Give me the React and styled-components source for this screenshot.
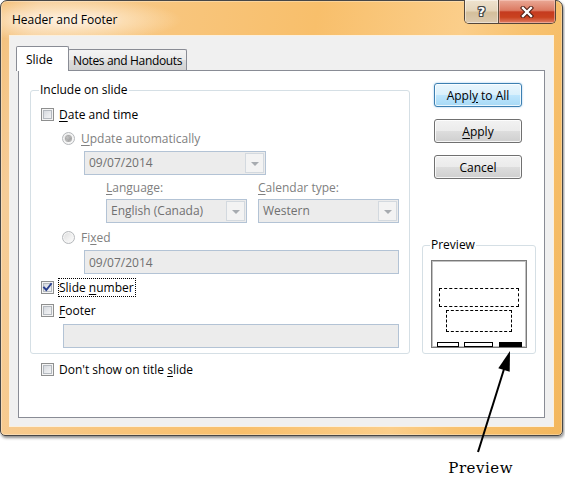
import React from 'react';
import styled, { createGlobalStyle } from 'styled-components';

const GlobalStyle = createGlobalStyle`
  html, body { margin: 0; padding: 0; background: #ffffff; }
  body { font-family: "Open Sans", "Noto Sans", sans-serif; font-size: 12px; color: #000; }
  * { box-sizing: border-box; }
`;

const Page = styled.div`
  position: relative;
  width: 565px;
  height: 502px;
  overflow: hidden;
  background: #fff;
`;

const Window = styled.div`
  width: 563px;
  height: 436px;
  border: 1px solid #474747;
  border-radius: 7px 7px 5px 5px;
  display: flex;
  flex-direction: column;
  background:
    radial-gradient(ellipse 115px 22px at 66px 19px, rgba(255, 246, 232, 0.9) 0%, rgba(255, 238, 212, 0.5) 55%, rgba(255, 232, 200, 0) 100%),
    linear-gradient(100deg, #f3bf78 0%, #f6cd98 6%, #f8c57c 28%, #f8bf6b 50%, #fbce8a 73%, #f8c270 83%, #f3b75d 100%);
  box-shadow: inset 0 0 0 1px rgba(255, 255, 255, 0.3), 1px 2px 3px rgba(0, 0, 0, 0.45);
`;

const TitleBar = styled.div`
  height: 34px;
  flex: none;
  display: flex;
  align-items: center;
  justify-content: space-between;
  padding: 2px 6px 0 11px;
`;

const Title = styled.span`
  font-size: 12px;
  color: #000;
  text-shadow: 0 0 8px rgba(255, 255, 255, 0.9), 0 0 14px rgba(255, 255, 255, 0.6);
`;

const CaptionButtons = styled.div`
  align-self: flex-start;
  margin-top: -3px;
  display: flex;
  height: 24px;
  border: 1px solid #54463a;
  border-top: none;
  border-radius: 0 0 5px 5px;
  overflow: hidden;
`;

const HelpButton = styled.div`
  width: 34px;
  display: flex;
  align-items: center;
  justify-content: center;
  border-right: 1px solid #5c4c3c;
  background: linear-gradient(#efe3cf 0%, #e5d6bc 45%, #d4bf9b 55%, #dccab0 100%);
  box-shadow: inset 0 0 0 1px rgba(255, 255, 255, 0.45);
`;

const HelpGlyph = styled.span`
  font-family: "DejaVu Sans", sans-serif;
  font-weight: bold;
  font-size: 13px;
  line-height: 13px;
  color: #fff;
  text-shadow: -1px 0 #444, 1px 0 #444, 0 -1px #444, 0 1px #444, 1px 1px #444, -1px -1px #444, 1px -1px #444, -1px 1px #444;
`;

const CloseButton = styled.div`
  width: 56px;
  display: flex;
  align-items: center;
  justify-content: center;
  background: linear-gradient(#eaa996 0%, #dc7a62 45%, #c53b1f 52%, #c9421f 75%, #e07e64 100%);
  box-shadow: inset 0 0 0 1px rgba(255, 220, 210, 0.45);
`;

const FrameBody = styled.div`
  flex: 1;
  display: flex;
  padding: 0 8px 8px;
`;

const Client = styled.div`
  flex: 1;
  display: flex;
  flex-direction: column;
  background: #f0f0f0;
  border: 1px solid #fbf0de;
  padding: 10px 8px 8px;
`;

const TabStrip = styled.div`
  display: flex;
  align-items: flex-end;
  height: 24px;
  flex: none;
`;

const Tab = styled.div`
  position: relative;
  z-index: ${p => (p.$active ? 1 : 0)};
  height: ${p => (p.$active ? 25 : 21)}px;
  width: ${p => p.$w}px;
  margin-left: ${p => p.$ml}px;
  margin-bottom: ${p => (p.$active ? -1 : 0)}px;
  padding-left: ${p => p.$pl}px;
  display: flex;
  align-items: center;
  border: 1px solid #898c95;
  border-bottom: none;
  border-radius: 2px 2px 0 0;
  background: ${p => (p.$active ? '#ffffff' : 'linear-gradient(#f3f3f3 0%, #ebebeb 50%, #dddddd 51%, #d2d2d2 100%)')};
  letter-spacing: ${p => p.$ls || 0}px;
  white-space: nowrap;
`;

const TabPanel = styled.div`
  flex: 1;
  background: #fff;
  border: 1px solid #898c95;
  display: grid;
  grid-template-columns: 380px 114px;
  grid-template-rows: auto auto;
  column-gap: 12px;
  align-content: start;
  padding: 11px 8px 0 11px;
`;

const GroupBox = styled.fieldset`
  margin: 0;
  min-width: 0;
  border: 1px solid #d5dfe5;
  border-radius: 3px;
  padding: 0 0 5px ${p => p.$pl}px;
  display: flex;
  flex-direction: column;
  align-items: flex-start;
`;

const Legend = styled.legend`
  padding: 0 1px;
  margin-left: ${p => p.$ml}px;
  line-height: 16px;
  font-size: 12px;
  color: #000;
`;

const Row = styled.div`
  display: flex;
  align-items: center;
  height: ${p => p.$h || 17}px;
  margin-top: ${p => p.$mt || 0}px;
  margin-left: ${p => p.$ml || 0}px;
  flex: none;
`;

const Label = styled.span`
  margin-left: ${p => p.$gap || 4}px;
  padding: 1px 1px 1px 0;
  line-height: 15px;
  border: 1px ${p => (p.$focus ? 'dotted #000' : 'solid transparent')};
  color: ${p => (p.$disabled ? '#808080' : '#000')};
  white-space: nowrap;
`;

const Key = styled.span`
  text-decoration: underline;
  text-underline-offset: 2px;
  text-decoration-thickness: 1px;
`;

const CheckBox = styled.span`
  width: 13px;
  height: 13px;
  flex: none;
  display: flex;
  align-items: center;
  justify-content: center;
  border: 1px solid #8e8f8f;
  background: linear-gradient(135deg, #cdd1d7 0%, #e8eaed 55%, #f8f8f8 100%);
  box-shadow: inset 0 0 0 1px #f4f4f4, inset 0 0 0 2px #b4b9bf;
`;

const Radio = styled.span`
  width: 13px;
  height: 13px;
  flex: none;
  border-radius: 50%;
  display: flex;
  align-items: center;
  justify-content: center;
  border: 1px solid #b5b8bb;
  background: linear-gradient(135deg, #dcdcdc 0%, #f2f2f2 60%, #fcfcfc 100%);
  box-shadow: inset 0 0 0 1px #f6f6f6;
`;

const RadioDot = styled.span`
  width: 5px;
  height: 5px;
  border-radius: 50%;
  background: radial-gradient(circle at 35% 35%, #c4c4c4 0%, #8f8f8f 100%);
  box-shadow: 0 0 0 1px #a9a9a9;
`;

const Combo = styled.div`
  width: ${p => p.$w}px;
  height: 24px;
  flex: none;
  display: flex;
  align-items: stretch;
  justify-content: space-between;
  border: 1px solid #b3c3d5;
  background: #ececec;
  padding: 1px 1px 1px 4px;
  color: #707070;
`;

const ComboText = styled.span`
  align-self: center;
  line-height: 16px;
  white-space: nowrap;
`;

const DropButton = styled.span`
  width: 19px;
  display: flex;
  align-items: center;
  justify-content: center;
  border: 1px solid #d3d9df;
  background: #f3f3f3;
`;

const DropArrow = styled.span`
  width: 0;
  height: 0;
  border-left: 4px solid transparent;
  border-right: 4px solid transparent;
  border-top: 4px solid #a7abb0;
  margin-top: 1px;
`;

const TextBox = styled.div`
  width: ${p => p.$w}px;
  height: 24px;
  flex: none;
  display: flex;
  align-items: center;
  border: 1px solid #b3c3d5;
  background: #ececec;
  padding-left: 4px;
  color: #707070;
  margin-top: ${p => p.$mt || 0}px;
  margin-left: ${p => p.$ml || 0}px;
`;

const PairGrid = styled.div`
  display: grid;
  grid-template-columns: 141px 141px;
  column-gap: 11px;
  margin-top: ${p => p.$mt || 0}px;
  margin-left: ${p => p.$ml || 0}px;
  flex: none;
`;

const SmallLabel = styled.span`
  line-height: 16px;
  color: #808080;
  white-space: nowrap;
`;

const SideColumn = styled.div`
  display: flex;
  flex-direction: column;
  justify-content: space-between;
`;

const ButtonStack = styled.div`
  display: flex;
  flex-direction: column;
  gap: 12px;
  padding: 1px 0 0 12px;
`;

const PushButton = styled.div`
  width: 88px;
  height: 24px;
  display: flex;
  align-items: center;
  justify-content: center;
  border-radius: 3px;
  border: 1px solid ${p => (p.$default ? '#3c7fb1' : '#707070')};
  background: ${p =>
    p.$default
      ? 'linear-gradient(#eaf6fd 0%, #d9f0fc 50%, #bee6fd 51%, #a7d9f5 100%)'
      : 'linear-gradient(#f2f2f2 0%, #ebebeb 50%, #dddddd 51%, #cfcfcf 100%)'};
  box-shadow: inset 0 0 0 1px ${p => (p.$default ? 'rgba(255,255,255,0.75)' : 'rgba(255,255,255,0.8)')}
    ${p => (p.$default ? ', 0 0 2px rgba(60, 150, 220, 0.6)' : '')};
  color: #000;
  white-space: nowrap;
`;

const PreviewBox = styled.div`
  width: 96px;
  height: 88px;
  margin-top: 7px;
  border: 1px solid #7a7a7a;
  box-shadow: inset 0 0 0 1px #c2c2c2;
  background: #fff;
  display: flex;
  flex-direction: column;
  padding-top: 27px;
`;

const Placeholder = styled.div`
  width: ${p => p.$w}px;
  height: ${p => p.$h}px;
  margin-left: ${p => p.$ml}px;
  margin-top: ${p => p.$mt || 0}px;
  border: 1px dashed #000;
`;

const FooterBars = styled.div`
  margin-top: auto;
  display: flex;
  align-items: flex-end;
  padding-left: 5px;
  height: 5px;
`;

const Bar = styled.div`
  width: ${p => p.$w}px;
  height: 5px;
  margin-left: ${p => p.$ml || 0}px;
  border: 1px solid #000;
  background: ${p => (p.$filled ? '#000' : '#fff')};
`;

const DontShowRow = styled(Row)`
  grid-column: 1;
`;

const Caption = styled.div`
  width: 563px;
  margin-top: 23px;
  display: flex;
  justify-content: flex-end;
  padding-right: 50px;
  font-family: "DejaVu Serif", "Liberation Serif", serif;
  font-size: 15px;
  line-height: 18px;
  letter-spacing: 0.5px;
  color: #000;
`;

const ArrowLayer = styled.svg`
  position: absolute;
  left: 0;
  top: 0;
  pointer-events: none;
`;

function Check({ checked }) {
  return (
    <CheckBox>
      {checked && (
        <svg width="11" height="11" viewBox="0 0 11 11">
          <path d="M2 5.5 L4.3 8 L9 2" fill="none" stroke="#2a3f8f" strokeWidth="1.9" strokeLinecap="square" />
        </svg>
      )}
    </CheckBox>
  );
}

function DropCombo({ w, text }) {
  return (
    <Combo $w={w}>
      <ComboText>{text}</ComboText>
      <DropButton>
        <DropArrow />
      </DropButton>
    </Combo>
  );
}

export default function App() {
  return (
    <Page>
      <GlobalStyle />
      <Window>
        <TitleBar>
          <Title>Header and Footer</Title>
          <CaptionButtons>
            <HelpButton>
              <HelpGlyph>?</HelpGlyph>
            </HelpButton>
            <CloseButton>
              <svg width="14" height="12" viewBox="0 0 14 12">
                <path d="M3 2 L11 10 M11 2 L3 10" stroke="#4a1c12" strokeWidth="4.4" strokeLinecap="square" fill="none" />
                <path d="M3 2 L11 10 M11 2 L3 10" stroke="#ffffff" strokeWidth="2.4" strokeLinecap="square" fill="none" />
              </svg>
            </CloseButton>
          </CaptionButtons>
        </TitleBar>
        <FrameBody>
          <Client>
            <TabStrip>
              <Tab $active $w={53} $ml={-2} $pl={9}>Slide</Tab>
              <Tab $w={119} $ml={-1} $pl={4} $ls={-0.35}>Notes and Handouts</Tab>
            </TabStrip>
            <TabPanel>
              <GroupBox $pl={10}>
                <Legend $ml={-2}>Include on slide</Legend>
                <Row $mt={8}>
                  <Check />
                  <Label><Key>D</Key>ate and time</Label>
                </Row>
                <Row $mt={7} $ml={21}>
                  <Radio><RadioDot /></Radio>
                  <Label $gap={5} $disabled><Key>U</Key>pdate automatically</Label>
                </Row>
                <Row $mt={4} $ml={43} $h={24}>
                  <DropCombo w={182} text="09/07/2014" />
                </Row>
                <PairGrid $mt={5} $ml={65}>
                  <SmallLabel><Key>L</Key>anguage:</SmallLabel>
                  <SmallLabel><Key>C</Key>alendar type:</SmallLabel>
                </PairGrid>
                <PairGrid $mt={3} $ml={65}>
                  <DropCombo w={141} text="English (Canada)" />
                  <DropCombo w={141} text="Western" />
                </PairGrid>
                <Row $mt={6} $ml={21}>
                  <Radio />
                  <Label $gap={5} $disabled>Fi<Key>x</Key>ed</Label>
                </Row>
                <TextBox $mt={4} $ml={43} $w={315}>09/07/2014</TextBox>
                <Row $mt={5}>
                  <Check checked />
                  <Label $focus>Slide <Key>n</Key>umber</Label>
                </Row>
                <Row $mt={6}>
                  <Check />
                  <Label><Key>F</Key>ooter</Label>
                </Row>
                <TextBox $mt={5} $ml={22} $w={336} />
              </GroupBox>
              <SideColumn>
                <ButtonStack>
                  <PushButton $default>Appl<Key>y</Key>&nbsp;to All</PushButton>
                  <PushButton><Key>A</Key>pply</PushButton>
                  <PushButton>Cancel</PushButton>
                </ButtonStack>
                <GroupBox $pl={8}>
                  <Legend $ml={-1}>Preview</Legend>
                  <PreviewBox>
                    <Placeholder $w={80} $h={19} $ml={7} />
                    <Placeholder $w={66} $h={22} $ml={14} $mt={3} />
                    <FooterBars>
                      <Bar $w={22} />
                      <Bar $w={29} $ml={5} />
                      <Bar $w={23} $ml={6} $filled />
                    </FooterBars>
                  </PreviewBox>
                </GroupBox>
              </SideColumn>
              <DontShowRow $mt={7} $ml={11}>
                <Check />
                <Label>Don't show on title <Key>s</Key>lide</Label>
              </DontShowRow>
            </TabPanel>
          </Client>
        </FrameBody>
      </Window>
      <Caption>Preview</Caption>
      <ArrowLayer width="565" height="502" viewBox="0 0 565 502">
        <line x1="478" y1="452" x2="505" y2="366" stroke="#000" strokeWidth="2" />
        <polygon points="510,351 498.3,368.2 509.7,371.8" fill="#000" />
      </ArrowLayer>
    </Page>
  );
}
